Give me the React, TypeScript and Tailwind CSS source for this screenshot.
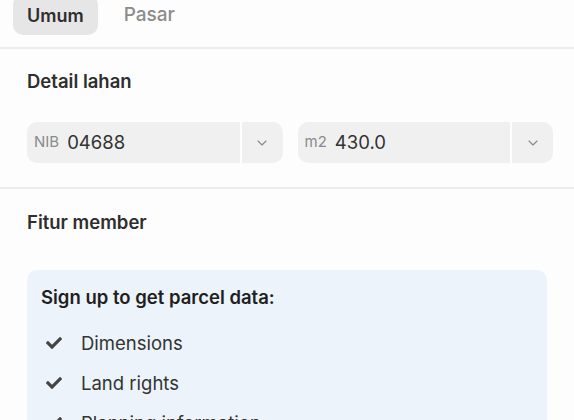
import React from 'react';
import { ChevronDown } from 'lucide-react';
import { FaCheck } from 'react-icons/fa';

const SelectBox: React.FC<{ label: string; value: string }> = ({ label, value }) => (
  <div className="flex-1 h-[41px] flex items-stretch rounded-[10px] bg-[#f0f0f0]">
    <div className="flex-1 flex items-center gap-[8px] pl-[7px]">
      <span className="text-[15px] text-[#8a8a8a]">{label}</span>
      <span className="text-[18.5px] text-[#333]">{value}</span>
    </div>
    <div className="w-[2px] bg-white" />
    <div className="w-[41px] flex items-center justify-center">
      <ChevronDown className="w-4 h-4 text-[#8a8a8a]" strokeWidth={1.75} />
    </div>
  </div>
);

const features = ['Dimensions', 'Land rights', 'Planning information'];

const App: React.FC = () => {
  return (
    <div className="w-[574px] h-[420px] overflow-hidden bg-[#fdfdfd] font-['Inter',sans-serif]">
      <div className="h-[47px] flex items-start px-[13px] gap-[26px]">
        <div className="-mt-[5px] h-[40px] px-[14px] flex items-center rounded-[10px] bg-[#e6e6e6] text-[18px] font-semibold text-[#2e2e2e]">
          Umum
        </div>
        <div className="h-[30px] flex items-center text-[19px] font-medium text-[#8c8c8c]">Pasar</div>
      </div>
      <div className="h-[2px] bg-[#ececec]" />

      <div className="pl-[27px] pr-[21px] pt-[21px] pb-[24px]">
        <h2 className="text-[18.5px] font-semibold text-[#2e2e2e] leading-[22px]">Detail lahan</h2>
        <div className="mt-[30px] flex gap-[15px]">
          <SelectBox label="NIB" value="04688" />
          <SelectBox label="m2" value="430.0" />
        </div>
      </div>
      <div className="h-[2px] bg-[#ececec]" />

      <div className="pl-[27px] pr-[21px] pt-[22px]">
        <h2 className="text-[18.5px] font-semibold text-[#2e2e2e] leading-[22px]">Fitur member</h2>
        <div className="mt-[37px] mr-[6px] rounded-[10px] bg-[#edf3fa] px-[14px] pt-[16px] pb-4">
          <p className="text-[18.5px] font-semibold text-[#1f1f1f] leading-[22px]">Sign up to get parcel data:</p>
          <ul className="mt-[24px] flex flex-col gap-[18px]">
            {features.map((f) => (
              <li key={f} className="flex items-center gap-[19px] pl-[5px] text-[18.5px] text-[#333] leading-[22px]">
                <FaCheck className="w-[16px] h-[16px] text-[#444]" />
                {f}
              </li>
            ))}
          </ul>
        </div>
      </div>
    </div>
  );
};

export default App;
